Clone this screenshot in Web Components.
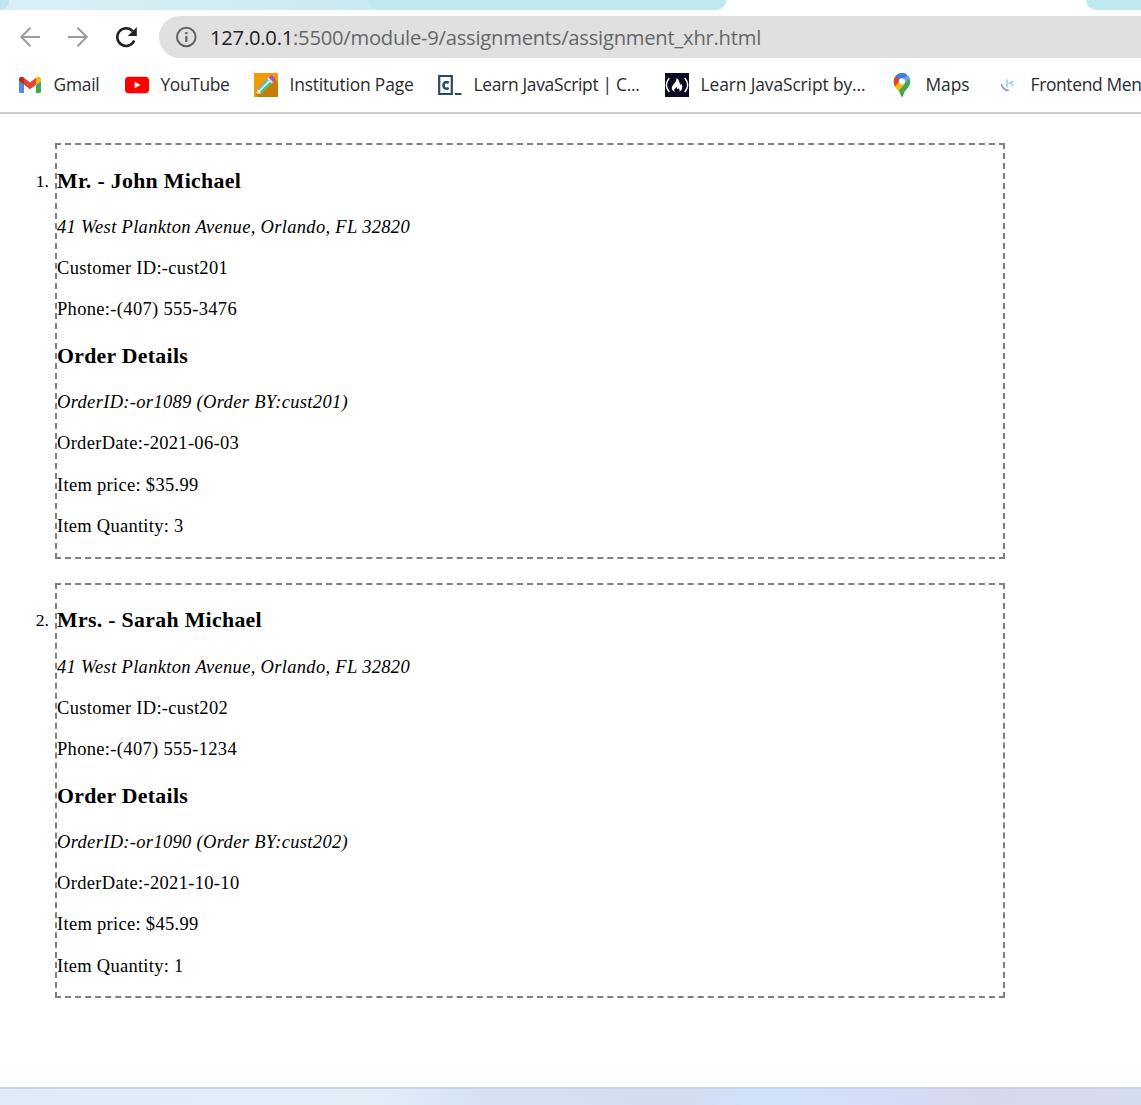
<!DOCTYPE html>
<html lang="en">
<head>
<meta charset="utf-8">
<title>Orders</title>
<style>
html,body{margin:0;height:100%;overflow:hidden;background:#fff}
</style>
</head>
<body>
<browser-window>
  <tab-strip></tab-strip>
  <address-bar></address-bar>
  <bookmark-bar>
    <book-mark icon="gmail" w="46">Gmail</book-mark>
    <book-mark icon="youtube" w="69">YouTube</book-mark>
    <book-mark icon="pencil" w="124">Institution Page</book-mark>
    <book-mark icon="codecademy" w="166">Learn JavaScript | C...</book-mark>
    <book-mark icon="fcc" w="165">Learn JavaScript by...</book-mark>
    <book-mark icon="maps" w="44">Maps</book-mark>
    <book-mark icon="mentor" w="111">Frontend Men</book-mark>
  </bookmark-bar>
  <order-list>
    <order-card number="1." style="--h:416px;--top:22.650px;--num:27px">
      <order-line kind="title" w="184">Mr. - John Michael</order-line>
      <order-line kind="note" w="353">41 West Plankton Avenue, Orlando, FL 32820</order-line>
      <order-line w="171">Customer ID:-cust201</order-line>
      <order-line w="180">Phone:-(407) 555-3476</order-line>
      <order-line kind="title" w="131">Order Details</order-line>
      <order-line kind="note" w="291">OrderID:-or1089 (Order BY:cust201)</order-line>
      <order-line w="182">OrderDate:-2021-06-03</order-line>
      <order-line w="141.5">Item price: $35.99</order-line>
      <order-line w="126.5">Item Quantity: 3</order-line>
    </order-card>
    <order-card number="2." style="--h:415px;--top:22.450px;--num:26px">
      <order-line kind="title" w="205">Mrs. - Sarah Michael</order-line>
      <order-line kind="note" w="353">41 West Plankton Avenue, Orlando, FL 32820</order-line>
      <order-line w="171">Customer ID:-cust202</order-line>
      <order-line w="180">Phone:-(407) 555-1234</order-line>
      <order-line kind="title" w="131">Order Details</order-line>
      <order-line kind="note" w="291">OrderID:-or1090 (Order BY:cust202)</order-line>
      <order-line w="182.5">OrderDate:-2021-10-10</order-line>
      <order-line w="141.5">Item price: $45.99</order-line>
      <order-line w="126.5">Item Quantity: 1</order-line>
    </order-card>
  </order-list>
  <desktop-edge></desktop-edge>
</browser-window>
<script>
const icons = {
gmail:`<path fill="#4f86ee" d="M1 8v10.500Q1 20 2.500 20H6V11.500z"/><path fill="#43a851" d="M18 11.500V20h3.500Q23 20 23 18.500V8z"/><path fill="#e24435" d="M6 4.800 12 9.600l6-4.800v6.900L12 16.200 6 11.700z"/><path fill="#b92b22" d="M1 8V6.200C1 3.400 3.800 2.900 6 4.800v6.900z"/><path fill="#f4b911" d="M23 8V6.200C23 3.400 20.200 2.900 18 4.800v6.900z"/>`,
youtube:`<rect y="3.700" width="24" height="16.600" rx="3.800" fill="#f00"/><path fill="#fff" d="m9.700 8.700 6 3.300-6 3.300z"/>`,
pencil:`<path fill="#f09a06" d="M0 0h24v24H0z"/><path fill="#c67c05" d="M21.500 6.500 24 9v15H4l-2-2z"/><g transform="translate(2 21.700) rotate(-45)"><path fill="#f8dfa9" d="M0 0 5.500-3v6z"/><path fill="#7b6650" d="M0 0 1.800-1v2z"/><path fill="#4db8df" d="M5-3.200h14.500v2.200H5z"/><path fill="#e9faf3" d="M5-1.100h14.500V.800H5z"/><path fill="#3fc777" d="M5 .8h14.500v2.400H5z"/><path fill="#d9e6ee" d="M19-3.200h2.200v6.400H19z"/><path fill="#a05aba" d="M21.200-3.200h2a2 2 0 0 1 2 2v2.400a2 2 0 0 1-2 2h-2z"/></g>`,
codecademy:`<path fill="none" stroke="#2b4861" stroke-width="2.200" d="M1.200 3h12.600v18H1.200z"/><path fill="none" stroke="#2b4861" stroke-width="2.600" d="M10.800 9.700C7.900 8.300 5.500 9.500 5.500 12.400s2.400 4.100 5.300 2.700"/><path fill="#2b4861" d="M17 20h6.500v2H17z"/>`,
fcc:`<path fill="#0a0a23" d="M0 0h24v24H0z"/><path fill="none" stroke="#fff" stroke-width="1.400" d="M4.300 5Q-1.600 12 4.300 19M19.700 5q5.900 7 0 14"/><path fill="#fff" d="M11.300 5c3.700 2 2.600 4.700 4.200 7 .5-.4.500-1 .4-1.700 2.300 3.500 1.700 7-1.600 8.500.7-1.900.1-2.900-1-3.600-.2 1-.8 1.100-1.300.5-.4-.7-.1-1.700-.5-2.500-.2 2-2.500 2.500-2.300 4.200.1.600.5 1.100 1 1.400-3.400-1-4.400-3.900-2.300-6.600C9.600 9.400 12 8.200 11.300 5z"/>`,
maps:`<clipPath id="pin"><path d="M12 0a8.300 8.300 0 0 1 8.300 8.300c0 5.700-4.200 7.400-6.400 12.200C13 22.700 13 24 12 24s-1-1.300-1.900-3.500C7.900 15.700 3.700 14 3.700 8.300A8.300 8.300 0 0 1 12 0z"/></clipPath><g clip-path="url(#pin)"><path fill="#43a654" d="M0 0h24v24H0z"/><path fill="#f7bb0c" d="M1 13.500 9.500 5l5.500 6-8.500 9.500z"/><path fill="#de4336" d="M2 0h4l5 6.200-6.500 8L2 12z"/><path fill="#3f7cf0" d="M5.500 3 10 6.800 12 8.300 19 1 12-2z"/><path fill="#6ba0f8" d="m17.500 1.500-6 7L14 11l8-7z"/></g><circle cx="12" cy="8.300" r="3.100" fill="#fff"/>`,
mentor:`<path fill="none" stroke="#8f90cf" stroke-width="1.600" d="M6.300 11c.8 3.700 3.500 6.100 7.400 6.400"/><path fill="none" stroke="#91d3df" stroke-width="1.500" d="M12 6.500v8M18.500 8.200l-4 1.900 4 2"/>`
};
/* Spreads a run of text to its nominal width through letter spacing. */
function track(span, width){
  span.style.letterSpacing = '0px';
  const natural = span.getBoundingClientRect().width;
  const n = span.dataset.count;
  if (width && n > 0) span.style.letterSpacing = ((width - natural) / n).toFixed(3) + 'px';
}
function define(name, html, ready){
  const t = document.createElement('template');
  t.innerHTML = html;
  customElements.define(name, class extends HTMLElement{
    connectedCallback(){
      if (this.shadowRoot) return;
      this.attachShadow({mode:'open'}).append(t.content.cloneNode(true));
      if (ready) ready(this, this.shadowRoot);
    }
  });
}
define('browser-window', `<style>:host{display:flex;flex-direction:column;width:1141px;height:1105px;overflow:hidden;background:#fff}</style><slot></slot>`);
define('tab-strip', `<style>
:host{display:flex;justify-content:space-between;height:10px;flex:none}
.tabs{width:726px;border-radius:0 0 11px 0;background:linear-gradient(90deg,#d9f1f6,#c8eaf2 370px);display:flex;justify-content:space-between;overflow:hidden}
.first{width:9px;border-radius:0 0 9px 0;background:#bde6f0}
.next{width:358px;border-radius:0 0 0 12px;background:#bfe8f1}
.last{width:55px;border-radius:0 0 0 11px;background:#bfe8f1}
</style><div class="tabs"><div class="first"></div><div class="next"></div></div><div class="last"></div>`);
define('address-bar', `<style>
:host{display:flex;align-items:center;height:42px;padding:6px 0 0 18px;flex:none}
svg{display:block;flex:none}
.nav{display:flex;gap:24px;width:141px}
.pill{flex:1;height:42px;border-radius:21px 0 0 21px;background:#e0e0e0;display:flex;align-items:center;gap:12px;padding-left:15px;box-sizing:border-box}
.url{font:20.200px/42px "Open Sans","Noto Sans",sans-serif;color:#666768;white-space:nowrap}
b{font-weight:400;color:#202124}
</style>
<div class="nav">
<svg width="24" height="24" viewBox="0 0 24 24" fill="none" stroke="#9b9b9b" stroke-width="2"><path d="M22 12H3.500M12.500 2.800 3.300 12l9.200 9.200"/></svg>
<svg width="24" height="24" viewBox="0 0 24 24" fill="none" stroke="#9b9b9b" stroke-width="2"><path d="M2 12h18.500M11.500 2.800 20.700 12l-9.200 9.200"/></svg>
<svg width="24" height="24" viewBox="0 0 24 24" fill="none" stroke="#202124" stroke-width="2.500"><path d="M20.200 15.500A8.800 8.800 0 1 1 18.700 6.300"/><path fill="#202124" stroke="none" d="M22.800 2v9h-9z"/></svg>
</div>
<div class="pill"><svg width="24" height="24" viewBox="0 0 24 24"><circle cx="12.300" cy="12" r="9.300" fill="none" stroke="#5f6368" stroke-width="2"/><path fill="#5f6368" d="M11.200 11h2.200v6h-2.200zM11.200 7h2.200v2.200h-2.200z"/></svg><div class="url"><span><b>127.0.0.1</b>:5500/module-9/assignments/assignment_xhr.html</span></div></div>`,
(h, r) => { const s = r.querySelector('span'); s.dataset.count = s.textContent.length; track(s, 551); });
define('bookmark-bar', `<style>:host{display:grid;grid-template-columns:107px 129px 184px 227px 225px 105px auto;height:54px;padding-left:18px;border-bottom:2px solid #cdcdcd;flex:none;overflow:hidden}</style><slot></slot>`);
define('book-mark', `<style>
:host{display:flex;align-items:center;gap:11.500px;height:54px;font:17.400px/52px "Open Sans","Noto Sans",sans-serif;color:#2a2b2e;white-space:nowrap}
svg{flex:none}
span{padding-bottom:2px}
</style><svg width="24" height="24" viewBox="0 0 24 24"></svg><span><slot></slot></span>`,
(h, r) => { r.querySelector('svg').innerHTML = icons[h.getAttribute('icon')];
  const s = r.querySelector('span'); s.dataset.count = h.textContent.length; track(s, +h.getAttribute('w')); });
define('order-list', `<style>:host{display:flex;flex-direction:column;gap:24px;flex:1;padding-top:29px;font:19.200px/22px "Liberation Serif","Times New Roman",serif;color:#000}</style><slot></slot>`);
define('order-card', `<style>
:host{display:flex;align-items:flex-start;height:var(--h)}
.number{width:49px;padding:var(--num) 6px 0 0;text-align:right;font-size:17.600px;flex:none}
.box{width:950px;height:var(--h);box-sizing:border-box;border:2px dashed #808080;padding-top:var(--top)}
</style><div class="number"></div><div class="box"><slot></slot></div>`,
(h, r) => { r.querySelector('.number').textContent = h.getAttribute('number'); });
define('order-line', `<style>
:host{display:block;margin-bottom:19.200px;white-space:nowrap;font-size:18.500px}
:host([kind=title]){font-size:21.800px;font-weight:700;line-height:26px;margin:22.400px 0}
:host([kind=title]:first-child){margin-top:0}
:host([kind=note]){font-style:italic}
</style><span><slot></slot></span>`,
(h, r) => { const s = r.querySelector('span'); s.dataset.count = h.textContent.length; track(s, +h.getAttribute('w')); });
define('desktop-edge', `<style>:host{display:block;height:16px;flex:none;border-top:2px solid #c8d3e6;background:linear-gradient(90deg,#e0ebf7 0,#e1eef8 380px,#d5e0f7 490px,#d5dbf0 680px,#cfe2fa 760px,#d5dcf8 880px,#d5d9eb 990px,#d6dcf0)}</style>`);
</script>
</body>
</html>
